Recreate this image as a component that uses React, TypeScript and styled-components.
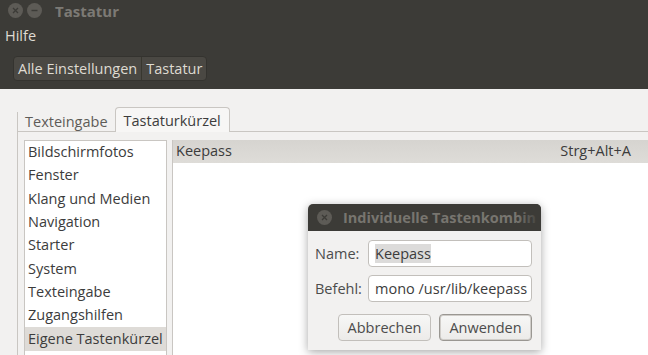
import styled, { createGlobalStyle } from "styled-components";

const GlobalStyle = createGlobalStyle`
  html, body {
    margin: 0;
    padding: 0;
    width: 648px;
    height: 355px;
    overflow: hidden;
    background: #f2f1f0;
  }
  * {
    box-sizing: border-box;
  }
  body {
    font-family: "Open Sans", "DejaVu Sans", sans-serif;
    font-size: 14.5px;
    color: #3c3c3c;
  }
`;

const Window = styled.div`
  position: relative;
  width: 648px;
  height: 355px;
  display: flex;
  flex-direction: column;
  overflow: hidden;
`;

const Header = styled.div`
  height: 89px;
  background: #3c3b37;
  display: flex;
  flex-direction: column;
`;

const TitleBar = styled.div`
  height: 21px;
  display: flex;
  align-items: center;
  padding-left: 8px;
  gap: 4px;
`;

const WinButton = styled.div`
  flex-shrink: 0;
  width: 15px;
  height: 15px;
  border-radius: 50%;
  background: #5d5b56;
  display: flex;
  align-items: center;
  justify-content: center;
`;

const TitleText = styled.span`
  margin-left: 9px;
  font-weight: 700;
  color: #7c7a75;
  font-size: 15px;
`;

const MenuBar = styled.div`
  height: 28px;
  display: flex;
  align-items: center;
  padding-left: 5px;
  color: #dfdbd2;
`;

const Toolbar = styled.div`
  padding: 7px 0 0 13px;
`;

const Breadcrumb = styled.div`
  display: inline-flex;
  height: 25px;
  border: 1px solid #34332f;
  border-radius: 4px;
  background: #4a4843;
  overflow: hidden;
`;

const Crumb = styled.div<{ $last?: boolean }>`
  display: flex;
  align-items: center;
  padding: 0 4px;
  color: #dfdbd2;
  border-right: ${(p) => (p.$last ? "none" : "1px solid #38372f")};
`;

const Body = styled.div`
  flex: 1;
  display: flex;
  flex-direction: column;
  padding: 17px 0 0 17px;
`;

const Tabs = styled.div`
  display: flex;
  align-items: flex-end;
  height: 25px;
`;

const Tab = styled.div<{ $active?: boolean }>`
  display: flex;
  align-items: center;
  height: ${(p) => (p.$active ? "25px" : "19px")};
  padding: 0 ${(p) => (p.$active ? "8px" : "7px")};
  border: ${(p) => (p.$active ? "1px solid #c9c6c2" : "none")};
  border-left: 1px solid #c9c6c2;
  border-bottom: none;
  border-radius: ${(p) => (p.$active ? "4px 4px 0 0" : "0")};
  background: ${(p) => (p.$active ? "#f7f6f5" : "transparent")};
  color: ${(p) => (p.$active ? "#3c3c3c" : "#5e5c58")};
  margin-bottom: ${(p) => (p.$active ? "-1px" : "0")};
  position: relative;
`;

const Panel = styled.div`
  flex: 1;
  border-top: 1px solid #c9c6c2;
  border-left: 1px solid #c9c6c2;
  background: #f2f1f0;
  display: flex;
  gap: 5px;
  padding: 8px 0 0 6px;
`;

const SectionList = styled.div`
  width: 143px;
  background: #ffffff;
  border: 1px solid #c9c6c2;
  border-bottom: none;
  display: flex;
  flex-direction: column;
`;

const SectionItem = styled.div<{ $selected?: boolean }>`
  height: 23.3px;
  display: flex;
  align-items: center;
  padding: 0 0 2px 3px;
  white-space: nowrap;
  background: ${(p) => (p.$selected ? "#dedbd7" : "transparent")};
`;

const ShortcutTree = styled.div`
  flex: 1;
  background: #ffffff;
  border-left: 1px solid #c9c6c2;
  display: flex;
  flex-direction: column;
`;

const ShortcutRow = styled.div`
  height: 23px;
  display: flex;
  align-items: center;
  justify-content: space-between;
  padding: 0 17px 2px 3px;
  background: linear-gradient(#d6d4d0, #dedcd8);
`;

const Dialog = styled.div`
  position: absolute;
  left: 308px;
  top: 204px;
  width: 233px;
  height: 146px;
  border-radius: 5px 5px 0 0;
  background: #f2f1f0;
  box-shadow: 0 2px 10px rgba(0, 0, 0, 0.35);
  display: flex;
  flex-direction: column;
  overflow: hidden;
`;

const DialogTitle = styled.div`
  position: relative;
  height: 27px;
  background: #3c3b37;
  display: flex;
  align-items: center;
  padding-left: 9px;
  white-space: nowrap;
  overflow: hidden;

  &::after {
    content: "";
    position: absolute;
    right: 0;
    top: 0;
    bottom: 0;
    width: 24px;
    background: linear-gradient(to right, rgba(60, 59, 55, 0), #3c3b37);
  }
`;

const DialogTitleText = styled.span`
  margin-left: 11px;
  font-weight: 700;
  color: #77756f;
  font-size: 14.5px;
`;

const DialogBody = styled.div`
  display: flex;
  flex-direction: column;
  padding: 9px 9px 0 7px;
  gap: 8px;
`;

const FieldRow = styled.div`
  display: flex;
  align-items: center;
  justify-content: space-between;
`;

const Label = styled.span`
  color: #4c4c4c;
`;

const Field = styled.div`
  width: 164px;
  height: 27px;
  border: 1px solid #c2bfbb;
  border-radius: 4px;
  background: #ffffff;
  display: flex;
  align-items: center;
  padding-left: 6px;
  white-space: nowrap;
  overflow: hidden;
`;

const Selected = styled.span`
  background: #dcdbda;
`;

const ButtonRow = styled.div`
  display: flex;
  justify-content: flex-end;
  gap: 8px;
  margin-top: 4px;
`;

const Button = styled.div<{ $default?: boolean }>`
  width: 93px;
  height: 27px;
  border: 1px solid ${(p) => (p.$default ? "#9a9792" : "#c2bfbb")};
  box-shadow: ${(p) => (p.$default ? "inset 0 0 0 1px #d0cdc9" : "none")};
  border-radius: 4px;
  background: linear-gradient(#f7f7f6, #ecebe9);
  display: flex;
  align-items: center;
  justify-content: center;
  color: #4c4c4c;
`;

function CloseIcon({ color }: { color: string }) {
  return (
    <svg width="7" height="7" viewBox="0 0 7 7">
      <path d="M1 1L6 6M6 1L1 6" stroke={color} strokeWidth="1.3" />
    </svg>
  );
}

function MinIcon() {
  return (
    <svg width="7" height="7" viewBox="0 0 7 7">
      <path d="M0.5 3.5H6.5" stroke="#3c3b37" strokeWidth="1.4" />
    </svg>
  );
}

const sections = [
  "Bildschirmfotos",
  "Fenster",
  "Klang und Medien",
  "Navigation",
  "Starter",
  "System",
  "Texteingabe",
  "Zugangshilfen",
  "Eigene Tastenkürzel",
];

export default function App() {
  return (
    <>
      <GlobalStyle />
      <Window>
        <Header>
          <TitleBar>
            <WinButton>
              <CloseIcon color="#3c3b37" />
            </WinButton>
            <WinButton>
              <MinIcon />
            </WinButton>
            <TitleText>Tastatur</TitleText>
          </TitleBar>
          <MenuBar>Hilfe</MenuBar>
          <Toolbar>
            <Breadcrumb>
              <Crumb>Alle Einstellungen</Crumb>
              <Crumb $last>Tastatur</Crumb>
            </Breadcrumb>
          </Toolbar>
        </Header>
        <Body>
          <Tabs>
            <Tab>Texteingabe</Tab>
            <Tab $active>Tastaturkürzel</Tab>
          </Tabs>
          <Panel>
            <SectionList>
              {sections.map((s) => (
                <SectionItem key={s} $selected={s === "Eigene Tastenkürzel"}>
                  {s}
                </SectionItem>
              ))}
            </SectionList>
            <ShortcutTree>
              <ShortcutRow>
                <span>Keepass</span>
                <span>Strg+Alt+A</span>
              </ShortcutRow>
            </ShortcutTree>
          </Panel>
        </Body>
        <Dialog>
          <DialogTitle>
            <WinButton>
              <CloseIcon color="#3c3b37" />
            </WinButton>
            <DialogTitleText>Individuelle Tastenkombin</DialogTitleText>
          </DialogTitle>
          <DialogBody>
            <FieldRow>
              <Label>Name:</Label>
              <Field>
                <Selected>Keepass</Selected>
              </Field>
            </FieldRow>
            <FieldRow>
              <Label>Befehl:</Label>
              <Field>mono /usr/lib/keepass</Field>
            </FieldRow>
            <ButtonRow>
              <Button>Abbrechen</Button>
              <Button $default>Anwenden</Button>
            </ButtonRow>
          </DialogBody>
        </Dialog>
      </Window>
    </>
  );
}
